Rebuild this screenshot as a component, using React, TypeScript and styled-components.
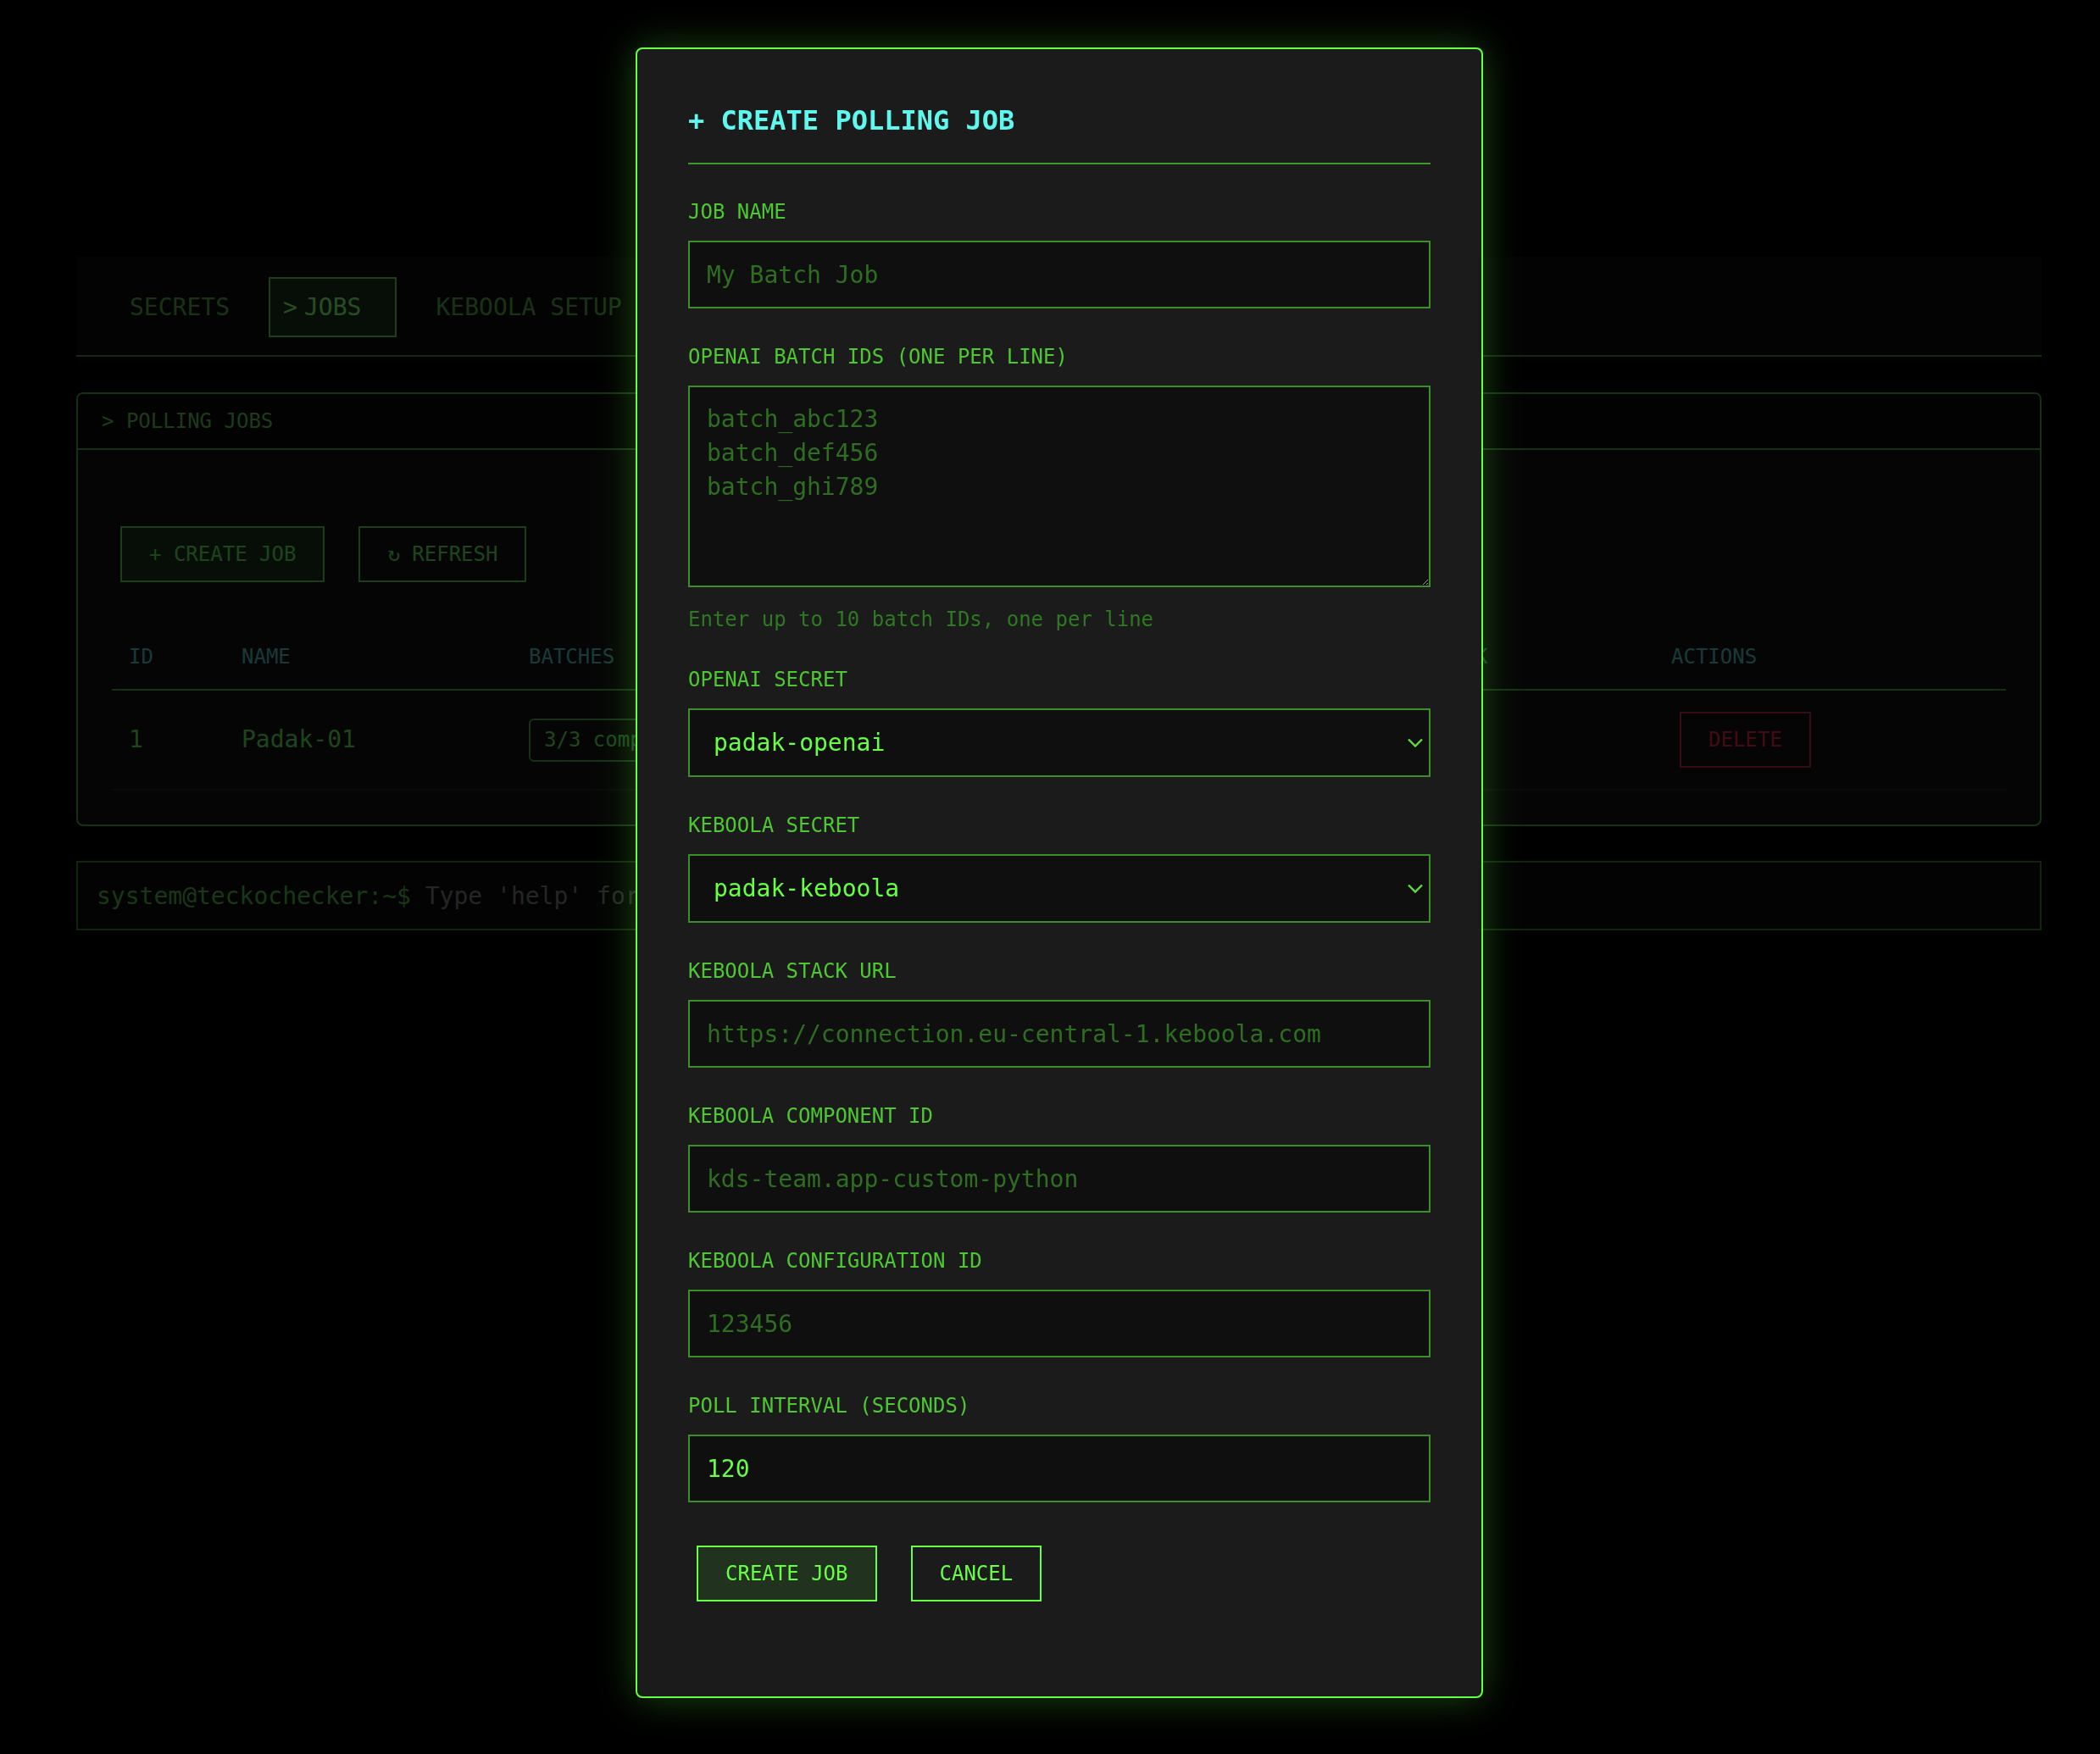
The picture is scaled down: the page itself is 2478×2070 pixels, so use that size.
import React from "react";
import styled, { createGlobalStyle } from "styled-components";

const MONO = `"DejaVu Sans Mono", "Liberation Mono", monospace`;

const GlobalStyle = createGlobalStyle`
  html, body {
    margin: 0;
    padding: 0;
    background: #000;
    overflow: hidden;
    font-family: ${MONO};
  }
  * { box-sizing: border-box; }
`;

/* ---------- Background page ---------- */

const Page = styled.div`
  min-height: 2070px;
  padding: 303px 69px 0 90px;
  background: #000;
`;

const TabNav = styled.nav`
  display: flex;
  gap: 4px;
  padding: 24px 21px 21px;
  background: #0a0a0a;
  border-bottom: 2px solid #3c8c32;
`;

const Tab = styled.div<{ $active?: boolean }>`
  position: relative;
  padding: 18px 40px;
  font-size: 28px;
  line-height: 31px;
  border: 2px solid ${(p) => (p.$active ? "#64cf57" : "transparent")};
  background: ${(p) => (p.$active ? "#1a2e1a" : "transparent")};
  color: ${(p) => (p.$active ? "#85ff75" : "#55a84b")};
  &::before {
    content: ${(p) => (p.$active ? '">"' : '""')};
    position: absolute;
    left: 15px;
    top: 18px;
  }
`;

const Panel = styled.section`
  margin-top: 42px;
  border: 2px solid #49a043;
  border-radius: 8px;
  background: #111;
  overflow: hidden;
`;

const PanelHeader = styled.div`
  padding: 18px 28px;
  font-size: 24px;
  line-height: 28px;
  color: #64c157;
  background: #070707;
  border-bottom: 2px solid #49a043;
`;

const PanelBody = styled.div`
  padding: 80px 40px 40px;
`;

const Toolbar = styled.div`
  display: flex;
  gap: 20px;
`;

const GhostButton = styled.button<{ $filled?: boolean; $danger?: boolean }>`
  margin: 10px;
  padding: 17px 32px;
  font-family: ${MONO};
  font-size: 24px;
  line-height: 28px;
  border: 2px solid ${(p) => (p.$danger ? "#b7283c" : "#57cf49")};
  background: ${(p) => (p.$filled ? "#1a2e1a" : "transparent")};
  color: ${(p) => (p.$danger ? "#e02848" : "#64e35d")};
`;

const Table = styled.table`
  width: 100%;
  margin-top: 40px;
  border-collapse: collapse;
  table-layout: fixed;
`;

const Th = styled.th`
  padding: 24px 20px;
  text-align: left;
  font-size: 24px;
  line-height: 28px;
  font-weight: normal;
  color: #55c0c0;
  border-bottom: 2px solid #43a73c;
  white-space: nowrap;
`;

const Td = styled.td`
  padding: 15px 20px;
  font-size: 28px;
  line-height: 32px;
  color: #64e35d;
  border-bottom: 2px solid #222;
  vertical-align: middle;
  white-space: nowrap;
  overflow: hidden;
`;

const Badge = styled.span`
  display: inline-block;
  padding: 10px 16px;
  font-size: 24px;
  line-height: 27px;
  border: 2px solid #4aa64a;
  border-radius: 6px;
  color: #64e35d;
`;

const Terminal = styled.div`
  margin-top: 41px;
  height: 82px;
  display: flex;
  align-items: center;
  padding: 0 22px;
  border: 2px solid #357e2e;
  background: #0a0a0a;
  font-size: 28px;
  white-space: pre;
`;

const Prompt = styled.span`
  color: #53b749;
`;

const TermText = styled.span`
  color: #7e7e7e;
`;

/* ---------- Modal ---------- */

const Backdrop = styled.div`
  position: fixed;
  inset: 0;
  background: rgba(0, 0, 0, 0.7);
  display: flex;
  justify-content: center;
  align-items: flex-start;
  padding: 56px 0 0 22px;
`;

const Modal = styled.div`
  width: 1000px;
  border: 2px solid #66ff44;
  border-radius: 8px;
  background: #1b1b1b;
  padding: 60px 60px 104px;
  box-shadow: 0 0 45px rgba(102, 255, 68, 0.28);
`;

const Title = styled.h2`
  margin: 0 0 42px;
  padding-bottom: 26px;
  border-bottom: 2px solid #3c9a28;
  font-size: 32px;
  line-height: 48px;
  font-weight: bold;
  color: #5ef8ee;
`;

const Field = styled.div`
  margin-bottom: 43px;
`;

const Label = styled.label`
  display: block;
  margin-bottom: 20px;
  font-size: 24px;
  line-height: 28px;
  color: #4ec831;
`;

const fieldBase = `
  display: block;
  width: 100%;
  font-family: ${MONO};
  font-size: 28px;
  background: #0f0f0f;
  border: 2px solid #3a8f26;
  border-radius: 0;
  color: #66ff44;
  outline: none;
  &::placeholder { color: #2e6e20; opacity: 1; }
`;

const TextInput = styled.input`
  ${fieldBase}
  height: 80px;
  padding: 0 20px;
`;

const TextArea = styled.textarea`
  ${fieldBase}
  height: 238px;
  padding: 18px 20px;
  line-height: 40px;
  resize: vertical;
`;

const Hint = styled.div`
  margin-top: 24px;
  font-size: 24px;
  line-height: 28px;
  color: #2e7a22;
`;

const SelectWrap = styled.div`
  position: relative;
`;

const Select = styled.select`
  ${fieldBase}
  height: 81px;
  padding: 0 40px 0 28px;
  appearance: none;
  -webkit-appearance: none;
`;

const Chevron = styled.svg`
  position: absolute;
  right: 9px;
  top: 35px;
  pointer-events: none;
`;

const Actions = styled.div`
  display: flex;
  gap: 20px;
`;

const ModalButton = styled.button<{ $primary?: boolean }>`
  margin: 8px 10px;
  padding: 17px 32px;
  font-family: ${MONO};
  font-size: 24px;
  line-height: 28px;
  border: 2px solid #66ff44;
  background: ${(p) => (p.$primary ? "#21331e" : "transparent")};
  color: #66ff44;
`;

const columns = [
  { name: "ID", w: 133 },
  { name: "NAME", w: 339 },
  { name: "BATCHES", w: 500 },
  { name: "STATUS", w: 487 },
  { name: "LAST CHECK", w: 361 },
  { name: "ACTIONS", w: 415 },
];

function SelectField({ label, value }: { label: string; value: string }) {
  return (
    <Field>
      <Label>{label}</Label>
      <SelectWrap>
        <Select defaultValue={value}>
          <option value={value}>{value}</option>
        </Select>
        <Chevron width="18" height="11" viewBox="0 0 18 11">
          <path d="M1 1.5 L9 9.5 L17 1.5" fill="none" stroke="#5ee03c" strokeWidth="2.4" />
        </Chevron>
      </SelectWrap>
    </Field>
  );
}

function InputField({ label, placeholder, value }: { label: string; placeholder?: string; value?: string }) {
  return (
    <Field>
      <Label>{label}</Label>
      <TextInput placeholder={placeholder} defaultValue={value} />
    </Field>
  );
}

export default function App() {
  return (
    <>
      <GlobalStyle />
      <Page>
        <TabNav>
          <Tab>SECRETS</Tab>
          <Tab $active>JOBS</Tab>
          <Tab>KEBOOLA SETUP</Tab>
        </TabNav>
        <Panel>
          <PanelHeader>&gt; POLLING JOBS</PanelHeader>
          <PanelBody>
            <Toolbar>
              <GhostButton $filled>+ CREATE JOB</GhostButton>
              <GhostButton>↻ REFRESH</GhostButton>
            </Toolbar>
            <Table>
              <colgroup>
                {columns.map((c) => (
                  <col key={c.name} style={{ width: c.w }} />
                ))}
              </colgroup>
              <thead>
                <tr>
                  {columns.map((c) => (
                    <Th key={c.name}>{c.name}</Th>
                  ))}
                </tr>
              </thead>
              <tbody>
                <tr>
                  <Td>1</Td>
                  <Td>Padak-01</Td>
                  <Td>
                    <Badge>3/3 completed</Badge>
                  </Td>
                  <Td>COMPLETED</Td>
                  <Td>2m ago</Td>
                  <Td>
                    <GhostButton $danger>DELETE</GhostButton>
                  </Td>
                </tr>
              </tbody>
            </Table>
          </PanelBody>
        </Panel>
        <Terminal>
          <Prompt>system@teckochecker:~$</Prompt>
          <TermText> Type 'help' for available commands</TermText>
        </Terminal>
      </Page>

      <Backdrop>
        <Modal>
          <Title>+ CREATE POLLING JOB</Title>
          <InputField label="JOB NAME" placeholder="My Batch Job" />
          <Field>
            <Label>OPENAI BATCH IDS (ONE PER LINE)</Label>
            <TextArea rows={5} placeholder={"batch_abc123\nbatch_def456\nbatch_ghi789"} />
            <Hint>Enter up to 10 batch IDs, one per line</Hint>
          </Field>
          <SelectField label="OPENAI SECRET" value="padak-openai" />
          <SelectField label="KEBOOLA SECRET" value="padak-keboola" />
          <InputField label="KEBOOLA STACK URL" placeholder="https://connection.eu-central-1.keboola.com" />
          <InputField label="KEBOOLA COMPONENT ID" placeholder="kds-team.app-custom-python" />
          <InputField label="KEBOOLA CONFIGURATION ID" placeholder="123456" />
          <InputField label="POLL INTERVAL (SECONDS)" value="120" />
          <Actions>
            <ModalButton $primary>CREATE JOB</ModalButton>
            <ModalButton>CANCEL</ModalButton>
          </Actions>
        </Modal>
      </Backdrop>
    </>
  );
}
